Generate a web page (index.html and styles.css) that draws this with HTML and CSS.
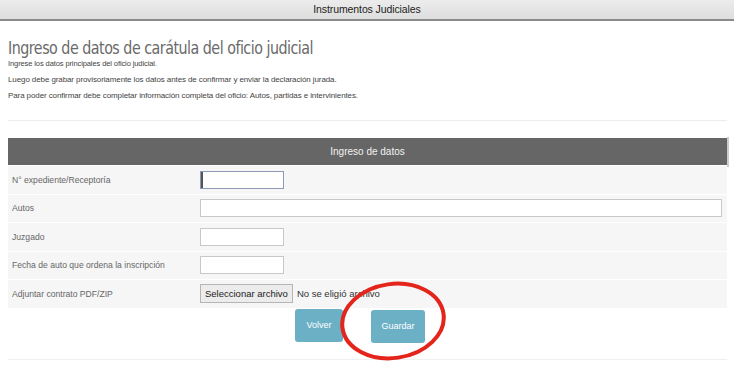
FILE: index.html
```html
<!DOCTYPE html>
<html lang="es">
<head>
    <meta charset="UTF-8">
    <title>Instrumentos Judiciales</title>
    <link rel="stylesheet" href="styles.css">
</head>
<body>
    <div class="topbar">Instrumentos Judiciales</div>

    <div class="page">
        <h1>Ingreso de datos de carátula del oficio judicial</h1>
        <p class="hint first">Ingrese los datos principales del oficio judicial.</p>
        <p class="hint">Luego debe grabar provisoriamente los datos antes de confirmar y enviar la declaración jurada.</p>
        <p class="hint last">Para poder confirmar debe completar información completa del oficio: Autos, partidas e intervinientes.</p>

        <hr class="sep">

        <div class="panel">
            <div class="panel-head">Ingreso de datos</div>
            <div class="row">
                <label>N° expediente/Receptoría</label>
                <input type="text" class="short focus">
            </div>
            <div class="row">
                <label>Autos</label>
                <input type="text" class="long">
            </div>
            <div class="row">
                <label>Juzgado</label>
                <input type="text" class="short">
            </div>
            <div class="row">
                <label>Fecha de auto que ordena la inscripción</label>
                <input type="text" class="short">
            </div>
            <div class="row">
                <label>Adjuntar contrato PDF/ZIP</label>
                <div class="file">
                    <span class="file-btn">Seleccionar archivo</span>
                    <span class="file-name">No se eligió archivo</span>
                </div>
            </div>
        </div>

        <div class="actions">
            <button class="btn">Volver</button>
            <button class="btn save">Guardar</button>
            <svg class="mark" width="112" height="82" viewBox="0 0 112 82">
                <ellipse cx="56" cy="41" rx="51" ry="37" fill="none" stroke="#e3251b" stroke-width="4" transform="rotate(-8 56 41)"/>
            </svg>
        </div>

        <hr class="sep bottom">
    </div>
    <div class="edge"></div>
</body>
</html>
```

FILE: styles.css
```css
body {
    margin: 0;
    background: #fff;
    font-family: "Liberation Sans", Arial, sans-serif;
    color: #555;
    position: relative;
    width: 734px;
    height: 370px;
    overflow: hidden;
}
.topbar {
    height: 19px;
    line-height: 19px;
    background: linear-gradient(#ececec, #dedede);
    border-bottom: 2px solid #8a8a8a;
    text-align: center;
    font-size: 10.5px;
    color: #222;
    letter-spacing: -0.1px;
}
.page {
    padding: 0 7px 0 8px;
}
h1 {
    margin: 17px 0 0;
    font-family: "DejaVu Sans", sans-serif;
    font-weight: normal;
    font-size: 17px;
    color: #6a6a6a;
    letter-spacing: -0.6px;
    transform: scaleX(0.84);
    transform-origin: left;
    white-space: nowrap;
}
.hint {
    margin: 7px 0 0;
    font-size: 8px;
    color: #444;
    letter-spacing: -0.1px;
}
.hint.first {
    margin-top: 1px;
    font-size: 7.5px;
}
.hint.last {
    margin-top: 7px;
}
.sep {
    border: 0;
    border-top: 1px solid #ececec;
    margin: 20px 0 0;
}
.panel {
    margin-top: 17px;
    background: #f6f6f6;
}
.panel-head {
    height: 27px;
    line-height: 27px;
    background: #666;
    color: #f2f2f2;
    text-align: center;
    font-size: 10px;
}
.row {
    display: flex;
    align-items: center;
    height: 27.5px;
    border-top: 1px solid #fff;
}
.row label {
    width: 188px;
    padding-left: 4px;
    font-size: 8.6px;
    color: #666;
}
.row input {
    border: 1px solid #c8c8c8;
    background: #fff;
    padding: 0;
    box-sizing: border-box;
    height: 18px;
}
.short {
    width: 84px;
}
.long {
    width: 522px;
}
.focus {
    border-color: #8c9bb8 !important;
    box-shadow: inset 2px 0 0 #555;
}
.file {
    display: flex;
    align-items: center;
    font-size: 9.5px;
    color: #333;
}
.file-btn {
    background: #ececec;
    border: 1px solid #b5b5b5;
    padding: 3px 4px;
    color: #222;
}
.file-name {
    margin-left: 4px;
}
.actions {
    position: relative;
    display: flex;
    gap: 28px;
    padding: 1px 0 0 287px;
    height: 50px;
}
.btn {
    width: 48px;
    height: 33px;
    background: #6cb0c6;
    border: 0;
    border-radius: 3px;
    color: #fff;
    font-family: "Liberation Sans", Arial, sans-serif;
    font-size: 9px;
    padding: 0;
}
.btn.save {
    width: 54px;
    margin-top: 1px;
}
.mark {
    position: absolute;
    left: 329px;
    top: -28px;
}
.sep.bottom {
    margin: 0;
    border-top-color: #f0f0f0;
}
.edge {
    position: absolute;
    left: 727px;
    top: 137px;
    width: 2px;
    height: 30px;
    background: #ccc;
}
```
